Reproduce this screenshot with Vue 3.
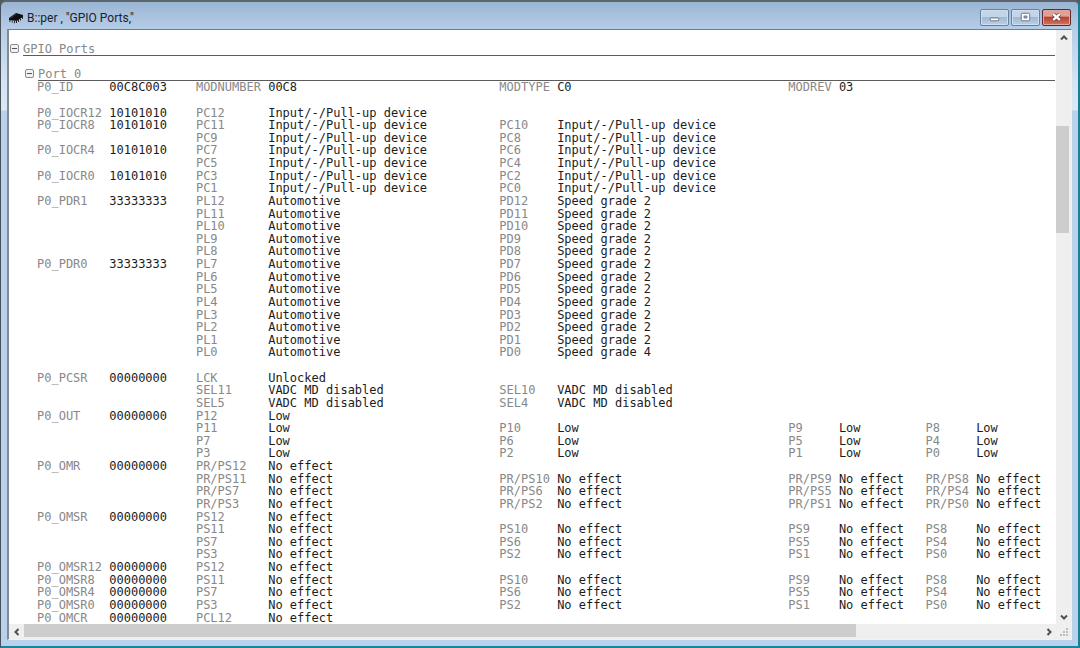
<script setup>
const input = 'Input/-/Pull-up device'
const none = 'No effect'
const dis = 'VADC MD disabled'

const rows = [
  ['P0_ID', '00C8C003', 'MODNUMBER', '00C8', 'MODTYPE', 'C0', 'MODREV', '03'],
  [],
  ['P0_IOCR12', '10101010', 'PC12', input],
  ['P0_IOCR8', '10101010', 'PC11', input, 'PC10', input],
  ['', '', 'PC9', input, 'PC8', input],
  ['P0_IOCR4', '10101010', 'PC7', input, 'PC6', input],
  ['', '', 'PC5', input, 'PC4', input],
  ['P0_IOCR0', '10101010', 'PC3', input, 'PC2', input],
  ['', '', 'PC1', input, 'PC0', input],
  ...Array.from({ length: 13 }, (_, i) => {
    const n = 12 - i
    const reg = n === 12 ? 'P0_PDR1' : n === 7 ? 'P0_PDR0' : ''
    return [reg, reg && '33333333', 'PL' + n, 'Automotive', 'PD' + n, n ? 'Speed grade 2' : 'Speed grade 4']
  }),
  [],
  ['P0_PCSR', '00000000', 'LCK', 'Unlocked'],
  ['', '', 'SEL11', dis, 'SEL10', dis],
  ['', '', 'SEL5', dis, 'SEL4', dis],
  ...portRows('P0_OUT', 'P', 'Low'),
  ...portRows('P0_OMR', 'PR/PS', none),
  ...portRows('P0_OMSR', 'PS', none),
  ['P0_OMSR12', '00000000', 'PS12', none],
  ...[8, 4, 0].map((n) => ['P0_OMSR' + n, '00000000', ...fields('PS', n, none)]),
  ['P0_OMCR', '00000000', 'PCL12', none],
]

function fields(prefix, low, value) {
  return [3, 2, 1, 0].flatMap((k) => [prefix + (low + k), value])
}
function portRows(register, prefix, value) {
  return [
    [register, '00000000', prefix + '12', value],
    ...[8, 4, 0].map((n) => ['', '', ...fields(prefix, n, value)]),
  ]
}
function cells(row) {
  return Array.from({ length: 10 }, (_, i) => row[i] || '')
}
</script>

<template>
  <main class="window">
    <header class="titlebar">
      <svg class="chip" viewBox="0 0 14 12" aria-hidden="true">
        <path d="M0 6 7 1l7 2v2L8 9 0 8z" fill="#0c0e11" />
        <path d="m1 6.500 6-4.500" stroke="#4b535c" stroke-width=".6" />
        <path d="M1 8v2M3.200 8.500v2.200M5.400 9v2.200M7.500 9v2M9.500 8v2M11.500 6.500v2M13.300 5v2" stroke="#1c2127" stroke-width="1.100" />
        <path d="M2.100 8.800v1.400M4.300 9.200v1.400M8.600 8.800v1.200M10.600 7.500v1.200M12.400 6v1.200" stroke="#e8eef4" stroke-width=".8" />
      </svg>
      <h1>B::per , "GPIO Ports,"</h1>
      <div class="controls">
        <button type="button" aria-label="Minimize">
          <svg viewBox="0 0 28 16"><rect x="9.500" y="8.500" width="9" height="3" rx="1" fill="#fff" stroke="#68717e" /></svg>
        </button>
        <button type="button" aria-label="Maximize">
          <svg viewBox="0 0 28 16"><rect x="9.500" y="3.500" width="9" height="8" rx="1" fill="#fff" stroke="#68717e" /><rect x="12.500" y="6.500" width="3" height="2" fill="#a9bfd7" stroke="#68717e" /></svg>
        </button>
        <button type="button" class="close" aria-label="Close">
          <svg viewBox="0 0 28 16"><path d="m10.500 4.500 7 6m0-6-7 6" stroke="#6b4b53" stroke-width="4.400" /><path d="m10.500 4.500 7 6m0-6-7 6" stroke="#fff" stroke-width="2.500" /></svg>
        </button>
      </div>
    </header>

    <section class="client">
      <div class="content">
        <div class="heading">
          <button type="button" class="toggle" aria-label="Collapse GPIO Ports"></button>
          <h2>GPIO Ports</h2>
        </div>
        <div class="heading nested">
          <button type="button" class="toggle" aria-label="Collapse Port 0"></button>
          <h2>Port 0</h2>
        </div>
        <div class="registers">
          <table aria-label="Port 0 registers">
            <colgroup>
              <col class="c10" /><col class="c12" /><col class="c10" /><col class="c32" /><col class="c8" />
              <col class="c32" /><col class="c7" /><col class="c12" /><col class="c7" /><col />
            </colgroup>
            <tbody>
              <tr v-for="(row, r) in rows" :key="r">
                <td v-for="(cell, c) in cells(row)" :key="c" :class="{ value: c % 2 }">{{ cell }}</td>
              </tr>
            </tbody>
          </table>
        </div>
      </div>

      <div class="vbar">
        <button type="button" aria-label="Scroll up"><svg viewBox="0 0 8 8"><path d="m1 5.500 3-3 3 3" /></svg></button>
        <div class="vtrack"><div class="vthumb"></div></div>
        <button type="button" aria-label="Scroll down"><svg viewBox="0 0 8 8"><path d="m1 2.500 3 3 3-3" /></svg></button>
      </div>
      <div class="hbar">
        <button type="button" aria-label="Scroll left"><svg viewBox="0 0 8 8"><path d="m5.500 1-3 3 3 3" /></svg></button>
        <div class="htrack"><div class="hthumb"></div></div>
        <button type="button" aria-label="Scroll right"><svg viewBox="0 0 8 8"><path d="m2.500 1 3 3-3 3" /></svg></button>
      </div>
      <div class="grip">
        <svg viewBox="0 0 8 8" aria-hidden="true"><path d="M6 0h2v2H6zM3 3h2v2H3zM6 3h2v2H6zM0 6h2v2H0zM3 6h2v2H3zM6 6h2v2H6z" fill="#bdbdbd" /></svg>
      </div>
    </section>
  </main>
</template>

<style>
body {
  background: #55585c;
}
</style>

<style scoped>
* {
  box-sizing: border-box;
}
.window {
  display: flex;
  flex-direction: column;
  min-height: 100vh;
  padding: 0 6px 6px;
  border: 1px solid #46515c;
  border-top: 2px solid #5d666f;
  border-right: 2px solid #1b7f93;
  border-bottom: 2px solid #16869b;
  border-radius: 6px 6px 0 0;
  background: linear-gradient(#9ab5d3 0, #b7cee8 28px, #d5e3f3 80px, #dce8f5 108px, #b9d1ea 109px);
}
.titlebar {
  display: flex;
  align-items: center;
  height: 27px;
  padding: 4px 1px 0 2px;
}
.chip {
  width: 14px;
  height: 12px;
  margin-right: 4px;
}
h1 {
  flex: 1;
  margin: 0;
  font: 12px/16px Roboto, sans-serif;
  color: #18222d;
}
.controls {
  display: flex;
  gap: 2px;
}
button {
  padding: 0;
  border: 0;
  background: none;
}
.controls button {
  width: 29px;
  height: 17px;
  border: 1px solid #69809b;
  border-radius: 2px;
  background: linear-gradient(#c3d5e9 0 45%, #9fb9d5 50%, #b9d0e8);
  box-shadow: inset 0 0 0 1px #d0dfef;
}
.controls svg {
  display: block;
  width: 100%;
  height: 100%;
}
.controls .close {
  border-color: #5c2a35;
  background: linear-gradient(#dda196 0 40%, #bd412b 50%, #d07663);
  box-shadow: inset 0 0 0 1px #dfa79e;
}
.client {
  flex: 1;
  display: grid;
  grid-template-columns: 1fr 15px;
  grid-template-rows: 1fr 15px;
  border: 1px solid #eef3f8;
  border-top: 1px solid #767b81;
  border-left: 2px solid #858a91;
  background: #efefef;
}
.content {
  display: flex;
  flex-direction: column;
  min-width: 0;
  overflow: hidden;
  padding-top: 1px;
  background: #fff;
  font: 12px/12px "DejaVu Sans Mono", monospace;
  color: #888;
}
.heading {
  display: flex;
  align-items: flex-end;
  gap: 4px;
  height: 25px;
  padding-left: 1px;
}
.heading.nested {
  padding-left: 16px;
}
.toggle {
  width: 9px;
  height: 9px;
  margin-bottom: 3px;
  border: 1px solid #8b8b8b;
  border-radius: 2px;
  background: linear-gradient(#555, #555) center / 5px 1px no-repeat, #f2f2f2;
}
h2 {
  flex: 1;
  margin: 0 1px 0 0;
  border-bottom: 1px solid #5c5c5c;
  font: inherit;
}
.registers {
  flex: 1;
  display: grid;
  padding-left: 28px;
}
table {
  width: 100%;
  height: 100%;
  table-layout: fixed;
  border-collapse: collapse;
}
tr {
  height: 12px;
}
td {
  padding: 0;
  white-space: pre;
}
.value {
  color: #1c1c1c;
}
.c7 { width: 7ch; }
.c8 { width: 8ch; }
.c10 { width: 10ch; }
.c12 { width: 12ch; }
.c32 { width: 32ch; }
.vbar {
  display: flex;
  flex-direction: column;
}
.hbar {
  display: flex;
}
.vbar button,
.hbar button {
  display: grid;
  place-items: center;
  flex: none;
  width: 15px;
  height: 15px;
}
.vbar svg,
.hbar svg {
  width: 8px;
  height: 8px;
  fill: none;
  stroke: #505050;
  stroke-width: 2;
}
.vtrack,
.htrack {
  flex: 1;
}
.vthumb {
  width: 13px;
  height: 19%;
  margin-top: 81px;
  background: #cdcdcd;
}
.hthumb {
  width: calc(82% - 2px);
  height: 13px;
  background: #cdcdcd;
}
.grip {
  display: grid;
  place-items: center;
}
.grip svg {
  width: 8px;
  height: 8px;
}
</style>
